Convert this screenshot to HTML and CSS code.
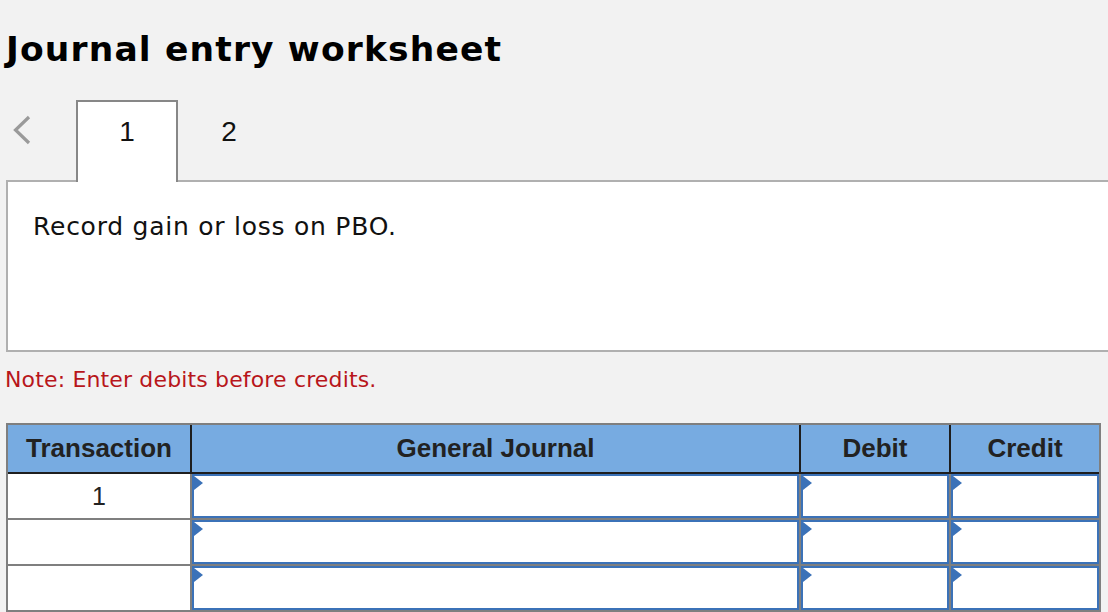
FILE: index.html
```html
<!DOCTYPE html>
<html>
<head>
<meta charset="utf-8">
<link rel="stylesheet" href="styles.css">
</head>
<body>
<h1 class="title">Journal entry worksheet</h1>
<div class="tabs">
  <svg class="chev" width="20" height="30" viewBox="0 0 20 30"><polyline points="17,2 3.5,15 17,28" fill="none" stroke="#9a9a9a" stroke-width="3.2"/></svg>
  <div class="tab active">1</div>
  <div class="tab">2</div>
</div>
<div class="panel">
  <p class="task">Record gain or loss on PBO.</p>
</div>
<p class="note">Note: Enter debits before credits.</p>
<div class="jtable">
  <div class="thead">
    <div class="th">Transaction</div>
    <div class="th">General Journal</div>
    <div class="th">Debit</div>
    <div class="th">Credit</div>
  </div>
  <div class="tbody">
    <div class="tx">1</div><div class="inp"></div><div class="inp"></div><div class="inp"></div>
    <div class="tx"></div><div class="inp"></div><div class="inp"></div><div class="inp"></div>
    <div class="tx"></div><div class="inp"></div><div class="inp"></div><div class="inp"></div>
  </div>
</div>
</body>
</html>
```
FILE: styles.css
```css
html, body {
  margin: 0;
  padding: 0;
}
body {
  background: #f2f2f2;
  width: 1108px;
  height: 612px;
  overflow: hidden;
  font-family: "DejaVu Sans", Verdana, sans-serif;
}
.title {
  margin: 29px 0 0 6px;
  font-family: "DejaVu Sans", Verdana, sans-serif;
  font-weight: bold;
  font-size: 34.5px;
  line-height: 40px;
  letter-spacing: 1.15px;
  color: #000;
}
.tabs {
  margin-top: 31px;
  height: 82px;
  display: flex;
  align-items: flex-start;
  position: relative;
  z-index: 1;
}
.chev {
  margin: 15px 0 0 12px;
}
.tab {
  width: 98px;
  height: 80px;
  padding-top: 14px;
  box-sizing: border-box;
  text-align: center;
  font-family: "Liberation Sans", Arial, sans-serif;
  font-size: 28px;
  line-height: 32px;
  color: #111;
  border: 2px solid transparent;
  border-bottom: 0;
}
.tab.active {
  margin-left: 44px;
  width: 102px;
  height: 82px;
  background: #fff;
  border-color: #878787;
}
.tab + .tab {
  width: 102px;
}
.panel {
  margin: -2px 0 0 6px;
  height: 172px;
  box-sizing: border-box;
  background: #fff;
  border: 2px solid #b0b0b0;
  border-right: 0;
}
.task {
  margin: 0;
  padding: 30px 0 0 25px;
  font-size: 25px;
  line-height: 30px;
  letter-spacing: 0.75px;
  color: #111;
}
.note {
  margin: 15px 0 0 5px;
  font-size: 22px;
  line-height: 26px;
  letter-spacing: 0.15px;
  color: #b8161b;
}
.jtable {
  margin: 30px 0 0 6px;
  width: 1095px;
  box-sizing: border-box;
  border: 2px solid #7f7f7f;
  background: #7f7f7f;
}
.thead, .tbody {
  display: grid;
  grid-template-columns: 182px 607px 148px 148px;
  column-gap: 2px;
}
.thead {
  background: #1e1e1e;
  border-bottom: 2px solid #1e1e1e;
}
.th {
  height: 47px;
  background: #77abe1;
  display: flex;
  align-items: center;
  justify-content: center;
  font-family: "Liberation Sans", Arial, sans-serif;
  font-weight: bold;
  font-size: 26px;
  color: #222;
}
.tbody {
  grid-auto-rows: 44px;
  row-gap: 2px;
}
.tx {
  background: #fff;
  display: flex;
  align-items: center;
  justify-content: center;
  font-family: "Liberation Sans", Arial, sans-serif;
  font-size: 25px;
  color: #222;
}
.inp {
  background: #fff;
  border: 2px solid #3b72b8;
  box-sizing: border-box;
  position: relative;
}
.inp::before {
  content: "";
  position: absolute;
  top: 0;
  left: 0;
  width: 0;
  height: 0;
  border-left: 9px solid #3b72b8;
  border-top: 7px solid transparent;
  border-bottom: 7px solid transparent;
}
```
